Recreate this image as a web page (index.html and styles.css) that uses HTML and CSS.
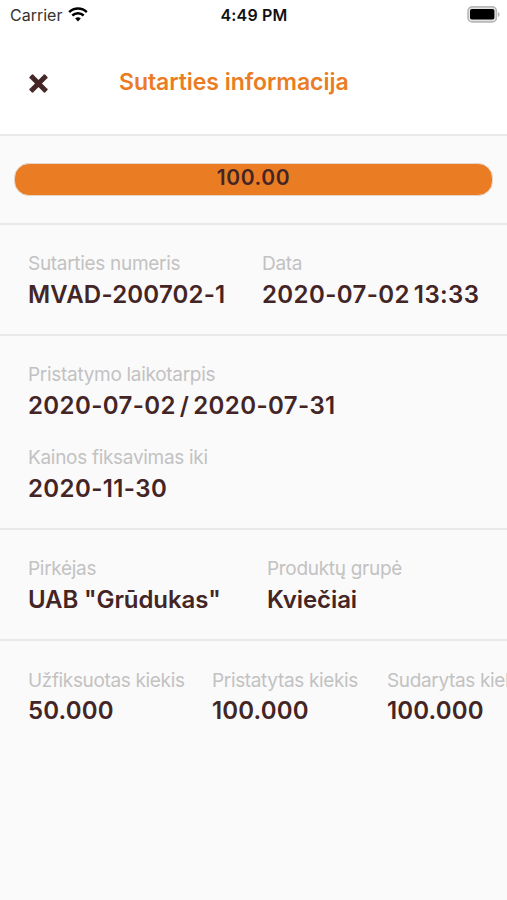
FILE: index.html
```html
<!DOCTYPE html>
<html lang="lt">
<head>
    <meta charset="UTF-8">
    <meta name="viewport" content="width=device-width, initial-scale=1.0">
    <title>Sutarties informacija</title>
    <link rel="stylesheet" href="styles.css">
</head>
<body>
    <!-- Status bar -->
    <div class="status-bar">
        <div class="carrier">
            <span class="carrier-name">Carrier</span>
            <svg class="wifi" viewBox="0 0 20 15" width="20" height="15">
                <path d="M1.2 5.1a12.8 12.8 0 0 1 17.6 0M4.3 8.5a8.2 8.2 0 0 1 11.4 0" fill="none" stroke="#000" stroke-width="2.5"/>
                <path d="M7.2 11.5a4.4 4.4 0 0 1 5.6 0L10 14.4z" fill="#000"/>
            </svg>
        </div>
        <span class="clock">4:49 PM</span>
        <svg class="battery" viewBox="0 0 33 17" width="33" height="17">
            <rect x="1" y="0.9" width="28.4" height="15" rx="4.2" fill="#e4e4e4" stroke="#b8b8b8" stroke-width="1.6"/>
            <rect x="3" y="3" width="24.4" height="10.6" rx="1.8" fill="#000"/>
            <path d="M31 6v5q1.6-.8 1.6-2.5T31 6z" fill="#b5b5b5"/>
        </svg>
    </div>

    <!-- Header -->
    <div class="header">
        <svg class="close" viewBox="0 0 20 20" width="20" height="20">
            <path d="M4.3 4.3l12.4 12.4M16.7 4.3L4.3 16.7" fill="none" stroke="#442525" stroke-width="5"/>
            <path d="M4.6 2.7L2.7 4.6M16.4 2.7l1.9 1.9M18.3 16.4l-1.9 1.9M2.7 16.4l1.9 1.9" fill="none" stroke="#442525" stroke-width="2.6" stroke-linecap="round"/>
        </svg>
        <span class="title">Sutarties informacija</span>
    </div>

    <!-- Progress -->
    <div class="section progress-section">
        <div class="progress"><span class="progress-value">100.00</span></div>
    </div>

    <div class="section row number-row">
        <div class="field">
            <div class="label">Sutarties numeris</div>
            <div class="value code">MVAD-200702-1</div>
        </div>
        <div class="field">
            <div class="label">Data</div>
            <div class="value date">2020-07-02 13:33</div>
        </div>
    </div>

    <div class="section">
        <div class="field">
            <div class="label">Pristatymo laikotarpis</div>
            <div class="value date">2020-07-02 / 2020-07-31</div>
        </div>
        <div class="field">
            <div class="label">Kainos fiksavimas iki</div>
            <div class="value date">2020-11-30</div>
        </div>
    </div>

    <div class="section row buyer-row">
        <div class="field">
            <div class="label">Pirkėjas</div>
            <div class="value name">UAB "Grūdukas"</div>
        </div>
        <div class="field">
            <div class="label">Produktų grupė</div>
            <div class="value name">Kviečiai</div>
        </div>
    </div>

    <!-- Amounts, the last one runs off the screen -->
    <div class="section row amount-row">
        <div class="field">
            <div class="label">Užfiksuotas kiekis</div>
            <div class="value amount">50.000</div>
        </div>
        <div class="field">
            <div class="label">Pristatytas kiekis</div>
            <div class="value amount">100.000</div>
        </div>
        <div class="field">
            <div class="label">Sudarytas kiekis</div>
            <div class="value amount">100.000</div>
        </div>
    </div>
</body>
</html>
```
FILE: styles.css
```css
* {
    box-sizing: border-box;
}

body {
    margin: 0;
    height: 900px;
    overflow: hidden;
    background: #fafafa;
    color: #442525;
    font-family: Inter, "Liberation Sans", sans-serif;
    white-space: nowrap;
}

.status-bar {
    display: grid;
    grid-template-columns: 1fr auto 1fr;
    align-items: center;
    height: 29px;
    padding: 0 7px 0 10px;
    background: white;
    color: #111;
    font-size: 16px;
}

.carrier {
    display: flex;
    align-items: center;
    gap: 6px;
}

.carrier-name {
    color: #333;
}

.clock {
    margin-right: 2px;
    font-weight: 600;
    letter-spacing: 0.2px;
}

.battery {
    justify-self: end;
}

.header {
    display: grid;
    grid-template-columns: 91px 1fr;
    align-items: center;
    height: 107px;
    padding: 2px 28px 0;
    background: white;
    border-bottom: 2px solid #e9e9e9;
}

.title {
    padding-bottom: 2px;
    color: #ea7d24;
    font-size: 23px;
    font-weight: 600;
    letter-spacing: -0.05px;
}

.section {
    padding: 26px 28px 0;
    border-bottom: 2px solid #e9e9e9;
    overflow: hidden;
}

.progress-section {
    height: 89px;
    padding: 27px 14px;
}

.progress {
    height: 33px;
    border: 1px solid #e6d5c8;
    border-radius: 15px;
    background: #ea7d24;
    text-align: center;
    font-size: 21px;
    line-height: 28px;
    font-weight: 600;
    letter-spacing: 0.6px;
}

.row {
    display: grid;
}

.number-row {
    grid-template-columns: 234px auto;
}

.buyer-row {
    grid-template-columns: 239px auto;
}

.amount-row {
    grid-template-columns: 184px 175px auto;
    border-bottom: none;
}

.field {
    height: 83px;
}

.label {
    width: max-content;
    color: #c2c2c2;
    font-size: 19px;
    line-height: 26px;
    letter-spacing: -0.3px;
}

.amount-row .label {
    line-height: 27px;
    letter-spacing: -0.35px;
}

.value {
    width: max-content;
    font-size: 24px;
    font-weight: 600;
    line-height: 35px;
}

.code {
    letter-spacing: 0.2px;
}

.date {
    letter-spacing: 0.4px;
    word-spacing: -2.5px;
}

.name {
    letter-spacing: -0.1px;
}

.amount {
    letter-spacing: 0.15px;
    line-height: 34px;
}
```
